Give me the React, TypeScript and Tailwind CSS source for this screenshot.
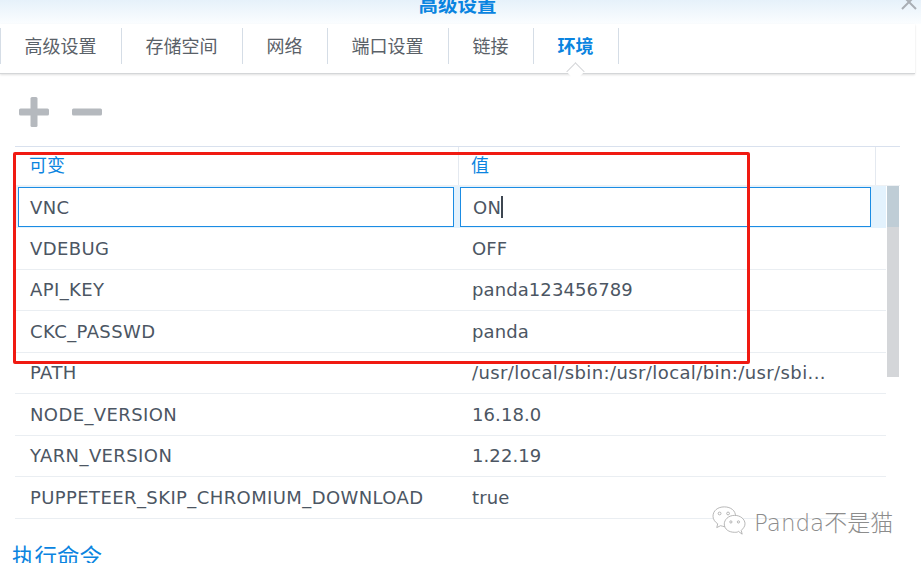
import React from 'react';

const font = { fontFamily: '"DejaVu Sans", "Noto Sans CJK SC", sans-serif' };

const tabs = [
  { label: '高级设置', w: 'w-[121px]' },
  { label: '存储空间', w: 'w-[121px]' },
  { label: '网络', w: 'w-[85px]' },
  { label: '端口设置', w: 'w-[121px]' },
  { label: '链接', w: 'w-[85px]' },
  { label: '环境', w: 'w-[85px]', active: true },
];

const rows = [
  ['VDEBUG', 'OFF'],
  ['API_KEY', 'panda123456789'],
  ['CKC_PASSWD', 'panda'],
  ['PATH', '/usr/local/sbin:/usr/local/bin:/usr/sbi...'],
  ['NODE_VERSION', '16.18.0'],
  ['YARN_VERSION', '1.22.19'],
  ['PUPPETEER_SKIP_CHROMIUM_DOWNLOAD', 'true'],
];

export default function App() {
  return (
    <div
      className="relative h-[563px] w-[921px] overflow-hidden bg-white text-[#4c5663]"
      style={font}
    >
      {/* title bar */}
      <div className="relative flex h-[24px] justify-center bg-gradient-to-b from-[#e6f1fa] to-[#fbfdff] pr-[6px]">
        <span className="mt-[-6px] text-[19.5px] leading-[24px] font-semibold text-[#0a84e0]">高级设置</span>
        <svg className="absolute top-0 right-[3px]" width="18" height="11" viewBox="0 0 18 11">
          <path d="M2 -5 L16 9 M16 -5 L2 9" stroke="#a9aeb4" strokeWidth="2" fill="none" />
        </svg>
      </div>

      {/* tabs */}
      <div className="relative mr-[6px] flex h-[50px] items-start border-b border-[#d4d6d8] pt-[4px] shadow-[0_1px_2px_rgba(0,0,0,0.12)]">
        <div className="flex border-l border-[#d5dde6]">
          {tabs.map((t) => (
            <div
              key={t.label}
              className={`flex h-[36px] items-center justify-center border-r border-[#d5dde6] pt-[1px] pr-[1px] text-[18px] ${t.w} ${
                t.active ? 'font-semibold text-[#0a84e0]' : 'text-[#5a6168]'
              }`}
            >
              {t.label}
            </div>
          ))}
        </div>
        <div className="absolute top-[41px] left-[569px] h-[13px] w-[13px] rotate-45 border-t border-l border-[#d4d6d8] bg-white" />
      </div>

      {/* toolbar */}
      <div className="flex items-center gap-[23px] pt-[23px] pl-[19px]">
        <svg width="30" height="30" viewBox="0 0 30 30" fill="#b5b9be">
          <rect x="0" y="11.5" width="30" height="7" rx="1.5" />
          <rect x="11.5" y="0" width="7" height="30" rx="1.5" />
        </svg>
        <svg width="30" height="30" viewBox="0 0 30 30" fill="#b5b9be">
          <rect x="0" y="11.5" width="30" height="7" rx="1.5" />
        </svg>
      </div>

      {/* grid */}
      <div className="mt-[19px] ml-[15px] w-[885px]">
        <div className="flex h-[40px] border-t border-b border-t-[#d9e1ee] border-b-[#eef1f4] text-[18px] leading-[38px] text-[#0a84e0]">
          <div className="w-[444px] border-r border-[#e4e9f0] pl-[14px]">可变</div>
          <div className="w-[417px] border-r border-[#e4e9f0] pl-[12px]">值</div>
        </div>

        <div className="relative pr-[14px]">
          {/* selected row being edited */}
          <div className="flex h-[42px] items-center gap-[6px] bg-[#e3f2fd] pr-[2px] pl-[3px] text-[18px] tracking-[0.4px]">
            <div className="flex h-[40px] w-[436px] items-center border border-[#1b8ce3] bg-white pl-[11px]">VNC</div>
            <div className="flex h-[40px] w-[411px] items-center border border-[#1b8ce3] bg-white pl-[12px]">
              ON<span className="h-[22px] w-[2px] bg-[#3d4650]" />
            </div>
          </div>

          {rows.map(([k, v]) => (
            <div key={k} className="flex h-[41.5px] items-center border-b border-[#eaeef2] text-[18px]">
              <div className="w-[444px] pl-[15px] tracking-[0.4px] whitespace-nowrap">{k}</div>
              <div className={`pl-[13px] whitespace-nowrap ${k === 'PATH' ? 'tracking-[0.4px]' : 'tracking-[0.1px]'}`}>{v}</div>
            </div>
          ))}

          {/* scrollbar */}
          <div className="absolute top-0 right-[1px] h-[191px] w-[12px] bg-[#d4d6d9]">
            <div className="h-[41px] bg-[#bfcdd6]" />
          </div>
        </div>
      </div>

      {/* section heading */}
      <div className="mt-[22px] ml-[12px] text-[22.5px] leading-[32px] text-[#0a84e0]">执行命令</div>

      {/* red annotation box */}
      <div className="absolute top-[152px] left-[13px] h-[212px] w-[737px] rounded-[2px] border-[3px] border-[#f01a12]" />

      {/* watermark */}
      <div className="absolute top-[505px] left-[710px] flex items-center gap-[6px]">
        <svg width="38" height="32" viewBox="0 0 38 34" fill="#fff" stroke="#a0a0a0" strokeWidth="0.8">
          <path d="M14 2 C7 2 2 6 2 12 C2 15 4 18 7 20 L6 24 L10 22 C11 22 13 23 14 23 C20 23 26 19 26 12 C26 6 21 2 14 2 Z" />
          <path d="M25 11 C18 11 14 16 14 20 C14 26 19 29 25 29 C27 29 28 29 29 28 L33 31 L32 27 C34 25 36 23 36 20 C36 15 31 11 25 11 Z" />
          <circle cx="9" cy="9" r="1.5" />
          <circle cx="18" cy="9" r="1.5" />
          <circle cx="21" cy="18" r="1.2" />
          <circle cx="29" cy="18" r="1.2" />
        </svg>
        <span className="pt-[3px] text-[23px] leading-[28px] font-light whitespace-nowrap text-[#8c8c8c]">Panda不是猫</span>
      </div>
    </div>
  );
}
